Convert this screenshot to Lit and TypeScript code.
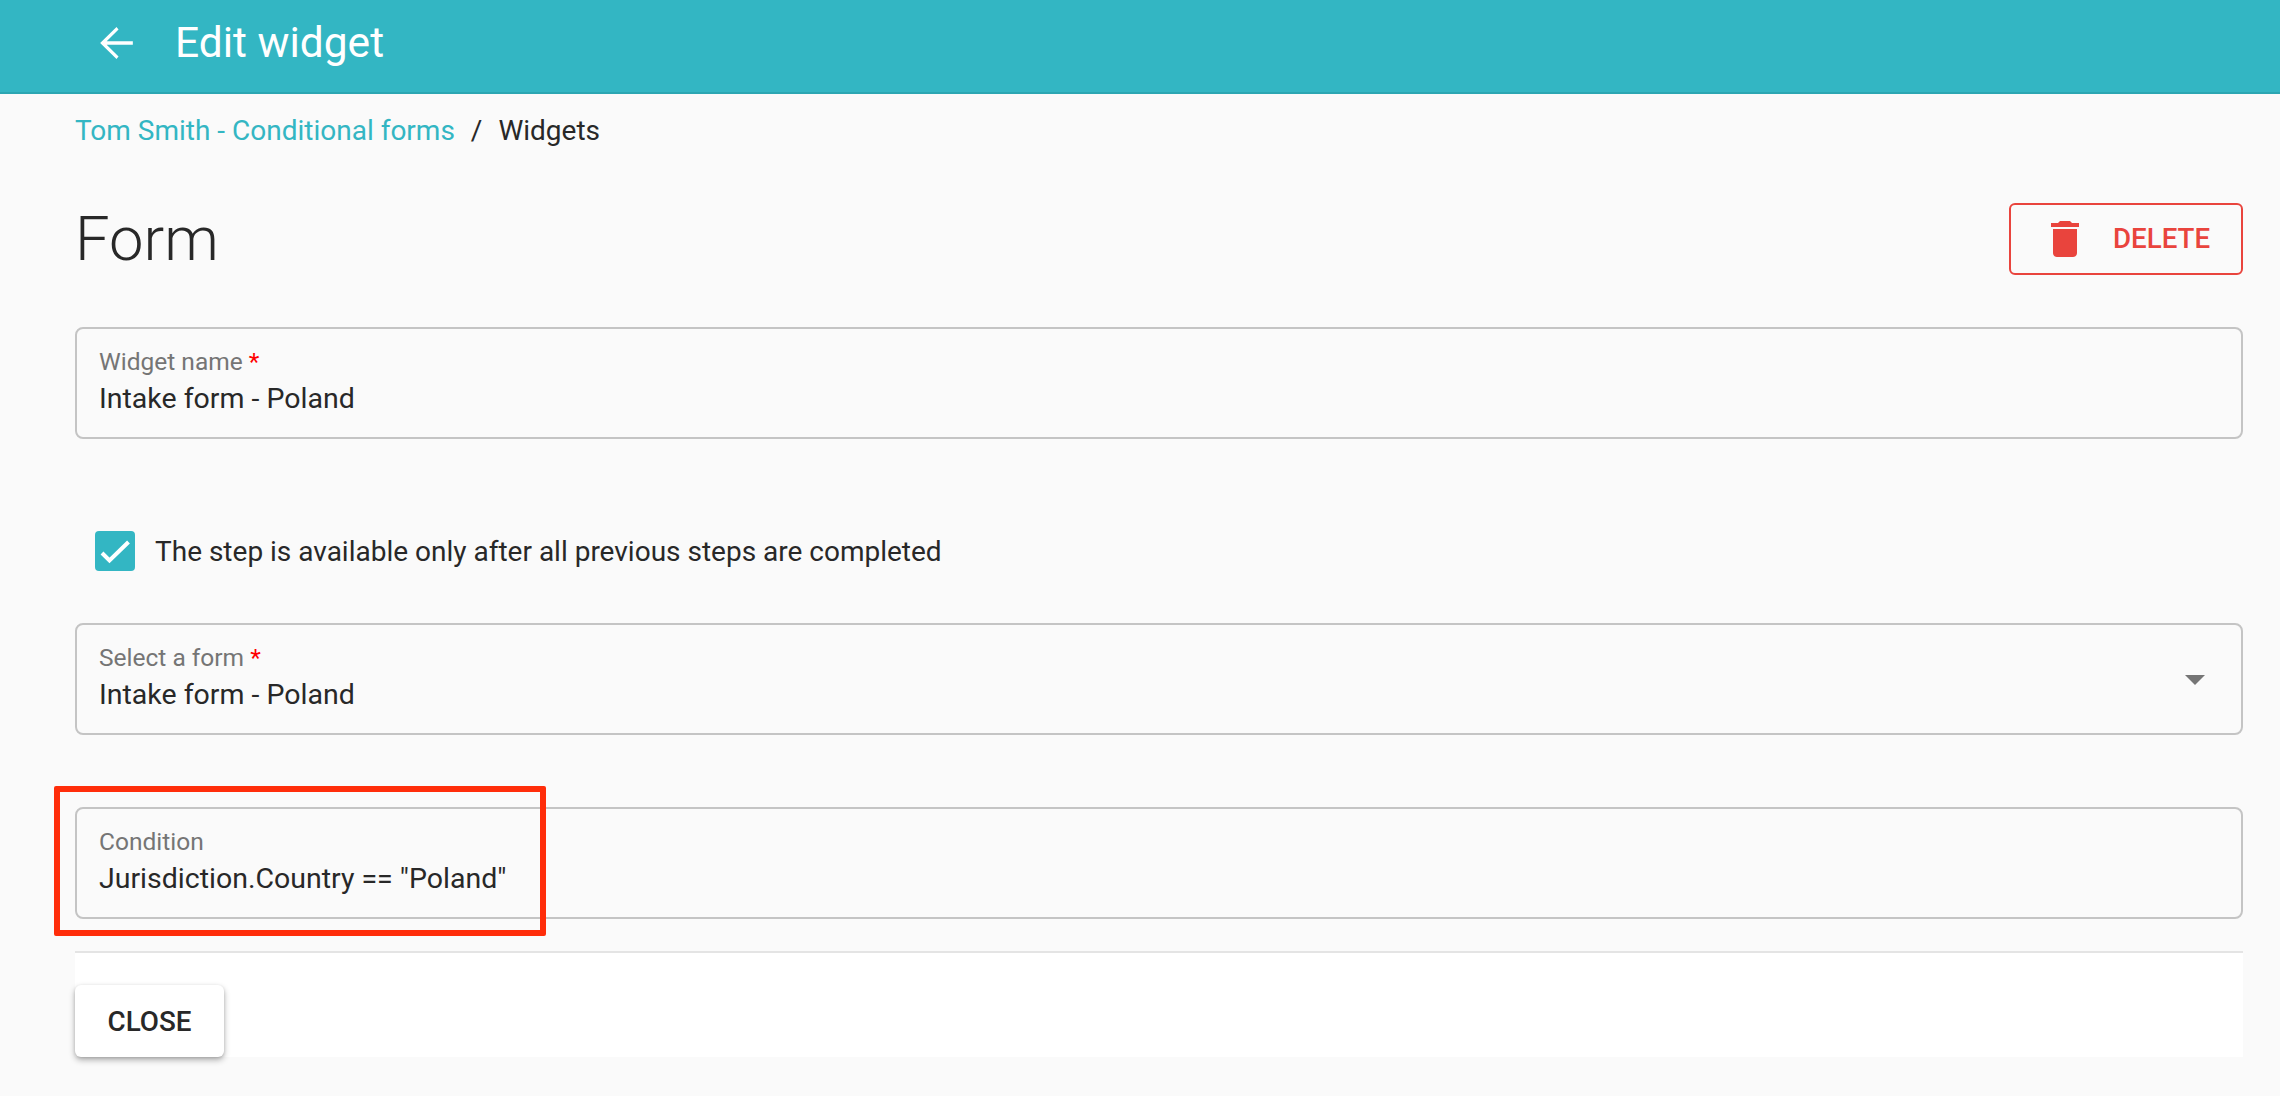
import { LitElement, html, css } from "lit";
import { customElement } from "lit/decorators.js";

@customElement("app-root")
export class AppRoot extends LitElement {
  static styles = css`
    :host { display: block; width: 2280px; height: 1096px; background: #fafafa; font-family: Roboto, sans-serif; color: #282828; position: relative; overflow: hidden; }
    * { box-sizing: border-box; }
    .bar { height: 94px; background: #33b6c3; border-bottom: 2px solid #2ca6b2; display: flex; align-items: center; padding: 0 0 6px 92px; color: #fff; }
    .bar svg { width: 49px; height: 48px; margin-right: 34px; display: block; }
    .bar span { font-size: 42.500px; line-height: 46px; }
    .main { padding: 0 37px 0 75px; }
    .crumbs { height: 72px; display: flex; align-items: center; font-size: 28px; gap: 16px; padding-top: 1px; }
    .crumbs a { color: #33b6c3; }
    .head { height: 142px; display: flex; justify-content: space-between; align-items: center; padding-top: 1px; margin: 1px 0 18px; }
    h1 { margin: 0; font-size: 61.500px; font-weight: 300; line-height: 70px; }
    .del { width: 234px; height: 72px; border: 2px solid #e9443d; border-radius: 6px; color: #e9443d; display: flex; align-items: center; font-size: 27.700px; font-weight: 500; padding-left: 40px; gap: 34px; }
    .del svg { width: 28px; height: 36px; display: block; }
    .field { height: 112px; border: 2px solid #c4c4c4; border-radius: 8px; padding: 19px 22px 0; position: relative; }
    .field label { display: block; font-size: 24.500px; line-height: 28px; color: #757575; }
    .field label i { font-style: normal; color: #f00; }
    .field .v { font-size: 28.500px; line-height: 36px; margin-top: 5px; }
    .check { display: flex; align-items: center; gap: 20px; margin: 92px 0 0 20px; height: 40px; font-size: 28px; }
    .box { width: 40px; height: 40px; border-radius: 4px; background: #33b6c3; display: flex; align-items: center; justify-content: center; }
    .box svg { width: 40px; height: 40px; display: block; }
    .f2 { margin-top: 52px; }
    .f3 { margin-top: 72px; }
    .arrow { position: absolute; right: 36px; top: 50px; width: 0; height: 0; border-left: 10px solid transparent; border-right: 10px solid transparent; border-top: 10px solid #757575; }
    .foot { margin-top: 32px; height: 106px; background: #fff; border-top: 2px solid #e4e4e4; padding-top: 32px; }
    .close { width: 149px; height: 72px; background: #fff; border-radius: 6px; box-shadow: 0 3px 6px rgba(0,0,0,.3), 0 1px 3px rgba(0,0,0,.12); display: flex; align-items: center; justify-content: center; font-size: 27.800px; font-weight: 500; }
    .mark { position: absolute; left: 54px; top: 786px; width: 492px; height: 150px; border: 6px solid #ff2d0a; border-radius: 2px; pointer-events: none; }
  `;

  render() {
    return html`
      <div class="bar">
        <svg viewBox="0 0 24 24" preserveAspectRatio="none" fill="#fff"><path d="M20 11.100H7.200l5.800-5.900L12 4l-8 8 8 8 1-1.200-5.800-5.900H20v-1.800z"/></svg>
        <span>Edit widget</span>
      </div>
      <div class="main">
        <div class="crumbs"><a>Tom Smith - Conditional forms</a><span>/</span><span>Widgets</span></div>
        <div class="head">
          <h1>Form</h1>
          <div class="del">
            <svg viewBox="5 3 14 18" fill="#e9443d"><path d="M6 19c0 1.100.9 2 2 2h8c1.100 0 2-.9 2-2V7H6v12zM19 4h-3.500l-1-1h-5l-1 1H5v2h14V4z"/></svg>
            <span>DELETE</span>
          </div>
        </div>
        <div class="field"><label>Widget name <i>*</i></label><div class="v">Intake form - Poland</div></div>
        <div class="check">
          <div class="box"><svg viewBox="0 0 40 40" fill="none" stroke="#fff" stroke-width="4"><path d="M7 22l7.500 7.500L33.500 11"/></svg></div>
          <span>The step is available only after all previous steps are completed</span>
        </div>
        <div class="field f2"><label>Select a form <i>*</i></label><div class="v">Intake form - Poland</div><div class="arrow"></div></div>
        <div class="field f3"><label>Condition</label><div class="v">Jurisdiction.Country == "Poland"</div></div>
        <div class="foot"><div class="close">CLOSE</div></div>
      </div>
      <div class="mark"></div>
    `;
  }
}
